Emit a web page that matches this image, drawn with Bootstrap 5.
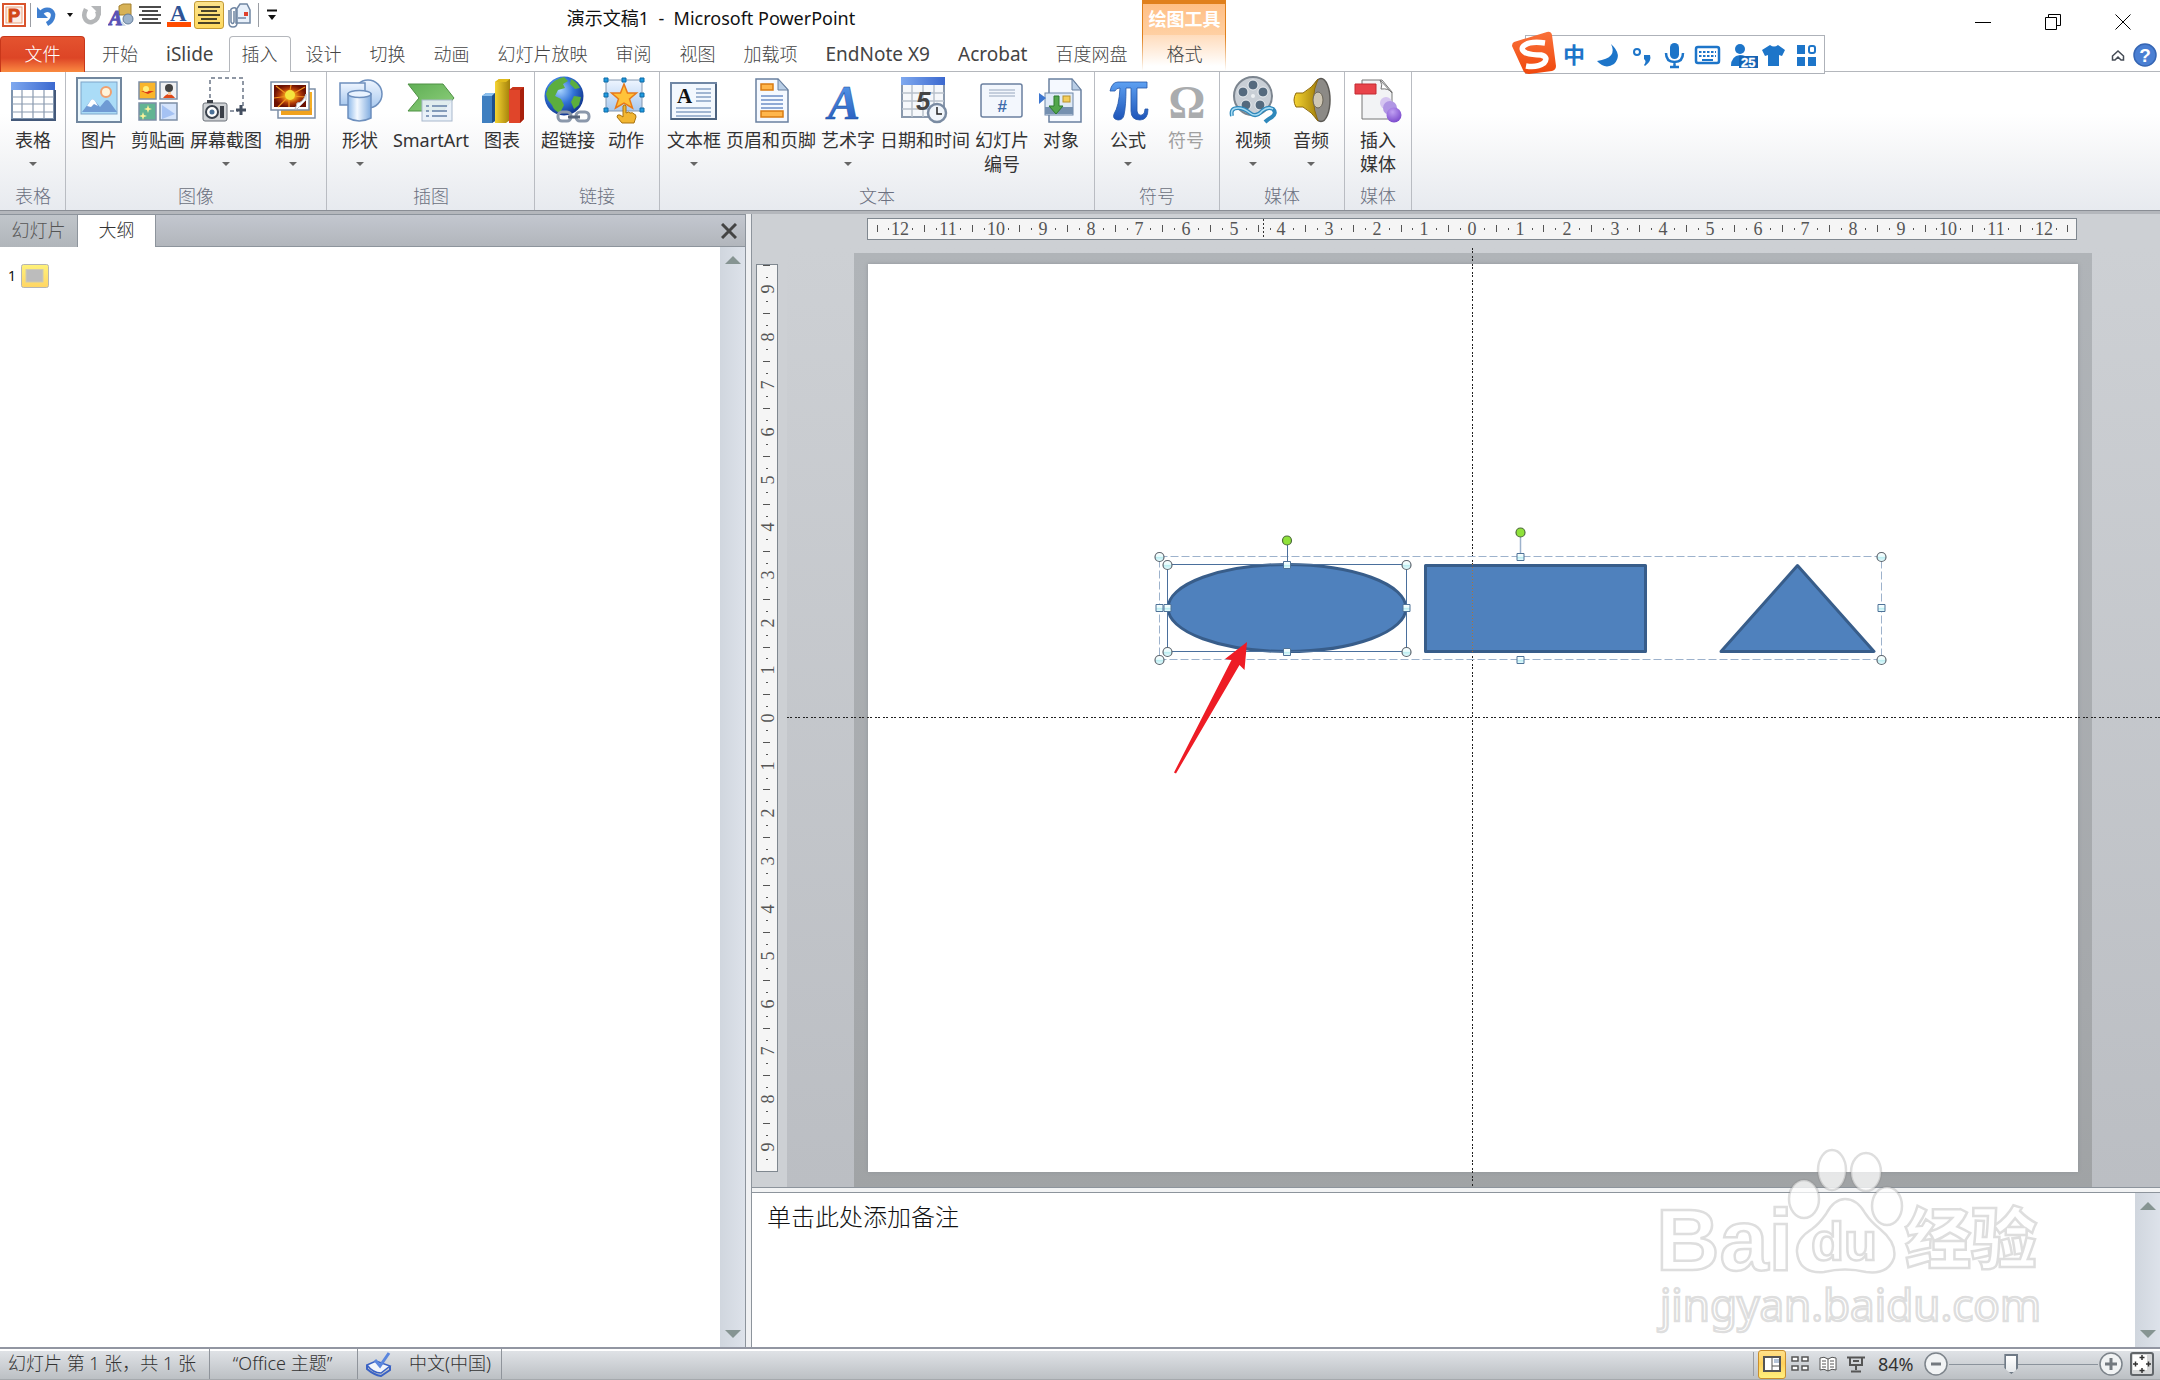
<!DOCTYPE html>
<html lang="zh-CN">
<head>
<meta charset="utf-8">
<meta name="viewport" content="width=device-width, initial-scale=1">
<title>演示文稿1 - Microsoft PowerPoint</title>
<link href="https://cdn.jsdelivr.net/npm/bootstrap@5.3.0/dist/css/bootstrap.min.css" rel="stylesheet">
<style>
body{font-family:"Noto Sans","Noto Sans CJK SC",sans-serif;font-size:18px;line-height:24px;color:#333;background:#fff}
button,textarea,input{font-family:inherit;color:inherit}
.plain{border:0;background:none;padding:0}
.app{height:100vh;min-height:900px;overflow:hidden}
.cjk{font-family:"Noto Sans","Noto Sans CJK SC",sans-serif;font-weight:300}
/* title bar */
.titlebar{height:36px}
.qat{gap:1px;height:30px}
.qat .plain{width:28px;height:28px;display:flex;align-items:center;justify-content:center}
.qat .caretbtn{width:15px}
.qat .held{width:30px;background:linear-gradient(#fbe28b,#ffd95e);border:1px solid #c39a35;border-radius:3px}
.vline{width:1px;height:24px;background:#9a9da3;margin:0 1px}
.apptitle{color:#111;white-space:pre;padding-top:6px}
.winctl{min-width:1017px;padding-right:2px}
.winctl .plain{width:70px;height:40px}
/* tabs */
.tabs{height:36px;border-bottom:1px solid #b4b7bc;padding-right:3px}
.tabs .rtab{display:block;height:36px;padding:6px 13px 0;margin-right:2px;color:#444;text-decoration:none;white-space:nowrap}
.tabs .filetab{width:85px;text-align:center;color:#fff;background:linear-gradient(#e4532f,#dd4526 60%,#f4793b 90%,#f98a3f);border:1px solid #c8371a;border-bottom:0;border-radius:4px 4px 0 0;padding:5px 0 0;margin-right:4px}
.tabs .rtab.current{background:#fff;border:1px solid #b4b7bc;border-bottom:0;border-radius:4px 4px 0 0;padding:5px 12px 0}
.tabs .latin{font-weight:400;font-size:19px}
.ctx{width:84px;height:71px;margin-top:-36px;text-align:center;text-decoration:none;color:#444;border:1px solid;border-top-width:4px;border-image:linear-gradient(#e0801c 50%,#fff) 1;background:linear-gradient(#ff9c00 4px,#ffbf85 4px,#ffd0a3 35px,#ffdcbc 35px,#fff 66px);background-origin:border-box}
.ctx b{display:block;color:#fff;line-height:24px;padding-top:3px;height:38px;font-weight:700}
/* ribbon */
.ribbon{height:139px;background:linear-gradient(#fff 30%,#f3f4f6 65%,#e7eaef);border-bottom:1px solid #8a8e95}
.rgroup{padding:0 4px;border-right:1px solid #b9bcc2}
.rgroup.slim{padding-right:3px}
.rgroup .plain{width:58px;height:112px;padding-top:4px;display:flex;flex-direction:column;align-items:center;white-space:nowrap;color:#333}
.rgroup .plain svg{flex:none;overflow:visible}
.rgroup .plain span{margin-top:4px}
.rgroup .w60{width:60px}.rgroup .w76{width:76px}.rgroup .w84{width:84px}.rgroup .w94{width:94px}
.rgroup .plain:disabled{color:#a0a0a0}
.drop::after{content:"";border:4px solid transparent;border-top:4px solid #666;border-bottom:0;margin-top:10px}
.gname{text-align:center;color:#6b7080;line-height:24px}
/* workspace */
.work{background:#cdd0d4;border-top:3px solid #b4b7bc}
.side{width:746px;border-right:1px solid #8d949c}
.sidehead{height:33px;border-top:1px solid #8d949c;border-bottom:1px solid #8d949c;background:linear-gradient(#c3c7cf,#b2b6bc)}
.sidehead .stab{width:78px;height:32px;padding-top:3px;text-align:center;text-decoration:none;color:#555;border-right:1px solid #8d949c;background:linear-gradient(#c0c5ca,#b0b5ba)}
.sidehead .stab.current{background:#fff;color:#333}
.outline{padding:17px 0 0 8px}
.outline span{font-size:14px;color:#111}
.vscroll{width:25px;background:linear-gradient(90deg,#d0d6de,#dde2ea)}
.vscroll .plain{width:25px;height:26px;display:flex;align-items:center;justify-content:center}
.gutter{width:6px;background:#f0f1f3;border-right:1px solid #8d949c}
.hruler{height:22px;width:1210px;border:1px solid #7f878f;background:#f5f5f5;display:block}
.vruler{width:22px;height:908px;border:1px solid #7f878f;background:#f5f5f5;display:block}
.rulerrow{height:34px;padding:4px 82px 0 115px}
.vcol{width:35px;padding:16px 0 0 4px}
.desk{background:linear-gradient(#cdd0d4,#bbbec3);padding:5px 1px 0 0;overflow:hidden}
.slideframe{padding:11px 14px 15px;background:linear-gradient(#b0b4b8,#a5a8ab 80%,#a0a3a5)}
.slide{width:1210px;height:908px;background:#fff;box-shadow:0 0 4px #8f9499}
.slide svg{display:block;overflow:visible}
.split{height:6px;background:#f2f3f4;border-top:1px solid #8d949c;border-bottom:1px solid #8d949c}
.notes{height:154px}
.notes textarea{border:0;resize:none;outline:0;font-size:24px;line-height:32px;padding:8px 15px;color:#111;overflow:hidden}
.notes textarea::placeholder{color:#111;opacity:1}
/* status */
.status{height:33px;border-top:2px solid #9296a2;background:linear-gradient(#fff 2px,#dfe2e6 2px,#bcc0c4);border-bottom:1px solid #a5a9ad;color:#333}
.status .cell{height:30px;padding:2px 10px 0 8px;border-right:1px solid #8f949b;white-space:nowrap}
.status .plain{width:28px;height:29px;display:flex;align-items:center;justify-content:center}
.status .held{background:linear-gradient(#ffe08a,#ffd15c 45%,#fff07e);border:1px solid #c98e2d;border-radius:3px}
.status .slim{width:26px}
.cell-pages{width:210px}.cell-theme{width:148px}.cell-lang{width:144px}
.pct{width:41px;font-weight:400}
.zoomer{-webkit-appearance:none;appearance:none;width:149px;height:24px;background:linear-gradient(#8b939c,#8b939c) center/100% 1px no-repeat}
.zoomer::-webkit-slider-thumb{-webkit-appearance:none;width:14px;height:20px;clip-path:polygon(0 0,100% 0,100% 70%,50% 100%,0 70%);border:2px solid #6f7a86;background:linear-gradient(#fff,#e4e7ea) padding-box}
/* floating input-method bar */
.ime{position:absolute;top:35px;right:335px;height:39px;width:312px}
.ime .box{height:39px;margin-left:12px;border:1px solid #aeb2b9;background:#fff}
.ime svg{position:absolute;left:0;top:-4px;overflow:visible}
.stamp{position:absolute;right:110px;bottom:36px;pointer-events:none}
</style>
</head>
<body>
<svg width="0" height="0" class="position-absolute" aria-hidden="true">
<defs>
<linearGradient id="gb" x1="0" y1="0" x2="0" y2="1"><stop offset="0" stop-color="#eef5ff"/><stop offset="1" stop-color="#a9c9ee"/></linearGradient>
<linearGradient id="gh" x1="0" y1="0" x2="1" y2="0"><stop offset="0" stop-color="#7fa9ef"/><stop offset="1" stop-color="#3b68cf"/></linearGradient>
<linearGradient id="gcy" x1="0" y1="0" x2="1" y2="0"><stop offset="0" stop-color="#8db9ea"/><stop offset=".4" stop-color="#f4f9ff"/><stop offset="1" stop-color="#7fabdf"/></linearGradient>
<linearGradient id="ggr" x1="0" y1="0" x2="1" y2="1"><stop offset="0" stop-color="#5fae55"/><stop offset="1" stop-color="#8fd07c"/></linearGradient>
<linearGradient id="gy" x1="0" y1="0" x2="1" y2="0"><stop offset="0" stop-color="#f5d432"/><stop offset="1" stop-color="#a3800a"/></linearGradient>
<linearGradient id="gA" x1="0" y1="0" x2="0" y2="1"><stop offset="0" stop-color="#5ea1f2"/><stop offset="1" stop-color="#1d54b8"/></linearGradient>
<linearGradient id="gor" x1="0" y1="0" x2="0" y2="1"><stop offset="0" stop-color="#f9713a"/><stop offset="1" stop-color="#f0480d"/></linearGradient>
<radialGradient id="gg" cx=".4" cy=".35" r=".7"><stop offset="0" stop-color="#a9d4ff"/><stop offset=".5" stop-color="#3273d8"/><stop offset="1" stop-color="#0d2f86"/></radialGradient>
<radialGradient id="gfl"><stop offset="0" stop-color="#fff04a"/><stop offset=".3" stop-color="#f2a51b"/><stop offset=".65" stop-color="#b33c08"/><stop offset="1" stop-color="#6d1204"/></radialGradient>
<radialGradient id="gp" cx=".4" cy=".3" r=".8"><stop offset="0" stop-color="#c0a0f2"/><stop offset="1" stop-color="#7340c8"/></radialGradient>
<linearGradient id="ghd" x1="0" y1="0" x2="0" y2="1"><stop offset="0" stop-color="#fff"/><stop offset=".45" stop-color="#e4fbfc"/><stop offset=".5" stop-color="#b9ecf0"/><stop offset="1" stop-color="#eafcff"/></linearGradient>
</defs>
</svg>

<div class="app d-flex flex-column position-relative">
  <header class="titlebar d-flex">
    <div class="qat d-flex align-items-center">
      <button class="plain" aria-label="PowerPoint"><svg width="26" height="26"><rect x="2" y="2" width="22" height="22" fill="#fff" stroke="#d9542c" stroke-width="2"/><rect x="5" y="5" width="16" height="16" fill="#fdeee4" stroke="#eaa07c"/><text x="7" y="20" font-family="Liberation Sans" font-weight="700" font-size="18" fill="#d24617" stroke="#d24617">P</text></svg></button>
      <div class="vline"></div>
      <button class="plain" aria-label="撤消"><svg width="22" height="22" fill="none"><path d="M5 9C10 3 18 6 17 12q-.5 5-6 8" stroke="#3f7fd0" stroke-width="4.500"/><path d="M1 3v11h11z" fill="#3f7fd0"/></svg></button>
      <button class="plain caretbtn" aria-label="撤消列表"><svg width="8" height="6"><path d="M1 1h6L4 5z" fill="#111"/></svg></button>
      <button class="plain" aria-label="重复"><svg width="22" height="22" fill="none"><path d="M5 5c-5 10 2 14 6 13s8-5 5-11" stroke="#b4b6b8" stroke-width="4.500"/><path d="M10 2h10v10z" fill="#b4b6b8"/></svg></button>
      <button class="plain" aria-label="形状"><svg width="26" height="26"><path d="M11 4l4-2h8v11H11z" fill="#d7b257" stroke="#a4802e"/><circle cx="20" cy="17" r="5" fill="#9db3cb" stroke="#637c99"/><path d="M14 19l4 5h-8z" fill="#cfd9e6"/><text x="1" y="23" font-family="Liberation Serif" font-style="italic" font-weight="700" font-size="20" fill="#5a52b5" stroke="#5a52b5">A</text></svg></button>
      <button class="plain" aria-label="居中"><svg width="24" height="20" stroke="#111" stroke-width="1.500"><path d="M1 2h22M4 6h16M1 10h22M4 14h16M1 18h22"/></svg></button>
      <button class="plain" aria-label="字体颜色"><svg width="26" height="26"><text x="4" y="19" font-family="Liberation Serif" font-weight="700" font-size="23" fill="#2d5396">A</text><path d="M1 20h24v5H1z" fill="#ff4b00"/></svg></button>
      <button class="plain held" aria-label="居中"><svg width="24" height="20" stroke="#111" stroke-width="1.500"><path d="M1 2h22M4 6h16M1 10h22M4 14h16M1 18h22"/></svg></button>
      <button class="plain" aria-label="附件"><svg width="26" height="26" fill="none" stroke="#7086a3" stroke-width="1.500"><path d="M10 8l4-6h7l3 6v13H10z" fill="#e8f0fa"/><path d="M3 8v13q0 4 4 4t4-4V8q-1-3-4-2t-2 3v11q2 3 3 0V9"/><path d="M18 10h4v4h-4z" fill="#e0402c" stroke="none"/><path d="M12 16h8"/></svg></button>
      <div class="vline mx-1"></div>
      <button class="plain caretbtn" aria-label="自定义快速访问工具栏"><svg width="10" height="12"><path d="M0 1.500h10" stroke="#111" stroke-width="2"/><path d="M1 6h8l-4 5z" fill="#111"/></svg></button>
    </div>
    <div class="apptitle flex-grow-1 text-center">演示文稿1  -  Microsoft PowerPoint</div>
    <div class="winctl d-flex justify-content-end">
      <button class="plain" aria-label="最小化"><svg width="16" height="16"><path d="M0 8.500h16" stroke="#000"/></svg></button>
      <button class="plain" aria-label="还原"><svg width="16" height="16" fill="none" stroke="#000"><path d="M.5 3.500h11v12H.5zM3.500 3.500V.5h12v11h-4"/></svg></button>
      <button class="plain" aria-label="关闭"><svg width="16" height="16" stroke="#000"><path d="M.5.5l15 15M15.500.5l-15 15"/></svg></button>
    </div>
  </header>

  <nav class="tabs d-flex cjk" aria-label="功能区">
    <a class="rtab filetab" href="#">文件</a>
    <a class="rtab" href="#">开始</a><a class="rtab latin" href="#">iSlide</a><a class="rtab current" href="#">插入</a><a class="rtab" href="#">设计</a><a class="rtab" href="#">切换</a><a class="rtab" href="#">动画</a><a class="rtab" href="#">幻灯片放映</a><a class="rtab" href="#">审阅</a><a class="rtab" href="#">视图</a><a class="rtab" href="#">加载项</a><a class="rtab latin" href="#">EndNote X9</a><a class="rtab latin" href="#">Acrobat</a><a class="rtab" href="#">百度网盘</a>
    <a class="ctx" href="#"><b>绘图工具</b>格式</a>
    <div class="ms-auto d-flex align-items-center gap-2">
      <button class="plain" aria-label="折叠功能区"><svg width="14" height="14" fill="none" stroke="#444b55" stroke-width="1.500"><path d="M1.500 7L7 2l5.500 5v4H10L7 8l-3 3H1.500z"/></svg></button>
      <button class="plain" aria-label="帮助"><svg width="24" height="24"><circle cx="12" cy="12" r="11" fill="#4a7fd3" stroke="#3565b3" stroke-width="1.500"/><text x="12" y="19" text-anchor="middle" font-family="Liberation Sans" font-weight="700" font-size="19" fill="#fff">?</text></svg></button>
    </div>
  </nav>

  <section class="ribbon d-flex cjk" aria-label="插入">
    <div class="rgroup slim">
      <div class="d-flex"><button class="plain drop"><svg width="48" height="48"><rect x="3" y="7" width="42" height="36" fill="#fff" stroke="#7d93ad" stroke-width="2"/><rect x="2" y="6" width="44" height="8" fill="url(#gh)"/><path d="M3 21h42M3 28h42M3 36h42M13 14v29M24 14v29M35 14v29" stroke="#8b9bb0" stroke-width="1.200"/><path d="M2 44h44V14" fill="none" stroke="#44597a" stroke-width="2"/></svg><span>表格</span></button></div>
      <div class="gname">表格</div>
    </div>
    <div class="rgroup">
      <div class="d-flex">
        <button class="plain"><svg width="48" height="48"><rect x="2" y="2" width="44" height="44" fill="#ecf8fd" stroke="#71879f" stroke-width="2"/><rect x="6" y="6" width="36" height="32" fill="#aadcf7" stroke="#7da4c9"/><circle cx="31" cy="16" r="5" fill="#fff4da" stroke="#f0a06e" stroke-width="2"/><path d="M7 36l9-12q2-2 4 1l5 6 5-6q2-2 4 0l8 11z" fill="#6f9bd4"/><path d="M12 30l4-6q2-2 4 1l3 5-4-2-3 3z" fill="#fff"/></svg><span>图片</span></button>
        <button class="plain w60"><svg width="48" height="48" stroke="#7d8fa6" stroke-width="1.500"><rect x="5" y="6" width="17" height="17" fill="#f9b52b"/><rect x="26" y="6" width="17" height="17" fill="#f1f1f3"/><rect x="5" y="27" width="17" height="17" fill="#62b493"/><rect x="26" y="27" width="17" height="17" fill="#d5e4fb"/><path d="M7 15h13l-6 3z" fill="#d83a17" stroke="none"/><circle cx="12" cy="13" r="3" fill="#ffef7d" stroke="none"/><circle cx="35" cy="12" r="4" fill="#444" stroke="none"/><path d="M29 22q6-8 12 0z" fill="#e04818" stroke="none"/><path d="M34 16h3v3h-3z" fill="#f6c69a" stroke="none"/><path d="M14 29l1 3 3 1-3 1-1 3-1-3-3-1 3-1zM9 36l1 3 3 1-3 1-1 3-1-3-3-1 3-1z" fill="#fbf29a" stroke="none"/><path d="M28 29l13 9-13 5z" fill="#a5c2f3" stroke="none"/></svg><span>剪贴画</span></button>
        <button class="plain w76 drop"><svg width="48" height="48"><path d="M41 30V2H8v22M28 35h8" fill="none" stroke="#6b7686" stroke-width="1.500" stroke-dasharray="4 3"/><path d="M39 29v10M34 34h10" stroke="#444f60" stroke-width="3"/><rect x="1" y="27" width="24" height="18" rx="2" fill="#cfd2d5" stroke="#6a7078"/><path d="M5 24h6v3H5zM18 30h4v12h-4z" fill="#3b4048"/><circle cx="10" cy="36" r="6" fill="#fff" stroke="#39414c" stroke-width="2"/><circle cx="10" cy="36" r="2.500" fill="#4b7197"/></svg><span>屏幕截图</span></button>
        <button class="plain drop"><svg width="48" height="48"><rect x="9" y="13" width="37" height="29" fill="#fff" stroke="#7c8ea6" stroke-width="1.500"/><path d="M12 34h31V16h-3v18z" fill="#f4ae25"/><path d="M12 32h31v7H12z" fill="#f0a21e"/><rect x="2" y="6" width="38" height="28" fill="#fff" stroke="#7c8ea6" stroke-width="1.500"/><rect x="5" y="9" width="32" height="22" fill="url(#gfl)"/><path d="M20 20L7 10M20 20L22 9M20 20L36 11M20 20L37 21M20 20L5 22M20 20L9 31M20 20L20 31" stroke="#f3931f" stroke-width="1.200"/><circle cx="21" cy="19" r="5" fill="#f5e43d"/><path d="M26 33q2-4 2-6 6 0 9-9v6l-9 9z" fill="#fff" stroke="#b9bec7"/></svg><span>相册</span></button>
      </div>
      <div class="gname">图像</div>
    </div>
    <div class="rgroup slim">
      <div class="d-flex">
        <button class="plain drop"><svg width="48" height="48" stroke="#6d8fbd" stroke-width="1.500"><circle cx="32" cy="18" r="14" fill="url(#gb)"/><rect x="4" y="7" width="25" height="22" fill="url(#gb)"/><path d="M12 18v24q11 6 23 0V18z" fill="url(#gcy)"/><ellipse cx="23.500" cy="18" rx="11.500" ry="3.500" fill="#e9f3ff"/></svg><span>形状</span></button>
        <button class="plain w84"><svg width="48" height="48"><path d="M1 8h35l11 14-11 13H1l11-13z" fill="url(#ggr)" stroke="#4f9145"/><rect x="15" y="24" width="30" height="21" fill="#e8f0f8" fill-opacity=".92" stroke="#a9b8cc"/><path d="M19 30h3M19 35h3M19 40h3M25 30h15M25 35h15M25 40h15" stroke="#6480a8" stroke-width="1.500"/></svg><span>SmartArt</span></button>
        <button class="plain"><svg width="48" height="48"><path d="M4 20l4-3h9v28l-3 2H4z" fill="#3f7fc0"/><path d="M4 20l4-3h9l-3 3z" fill="#8cc0ee"/><path d="M14 20l3-3v28l-3 2z" fill="#1f4f8a"/><path d="M17 6l4-3h11v41l-4 3H17z" fill="url(#gy)"/><path d="M17 6l4-3h11l-4 3z" fill="#e0bb1c"/><path d="M31 14l4-3h11v32l-4 4H31z" fill="#e0452a"/><path d="M31 14l4-3h11l-4 3z" fill="#c7341b"/><path d="M42 14l4-3v32l-4 4z" fill="#a8200c"/></svg><span>图表</span></button>
      </div>
      <div class="gname">插图</div>
    </div>
    <div class="rgroup">
      <div class="d-flex">
        <button class="plain"><svg width="48" height="48"><circle cx="20" cy="20" r="19.500" fill="url(#gg)"/><path d="M4 12Q10 3 20 1l4 4-5 3 2 4-7 2-3 6 6 3 3 6-4 8q-6-2-8-8L4 24l-2-6zM27 3q6 3 9 9l-5 1-5-5zM30 20l7 1-2 8-5 4-3-7z" fill="#5cae3d"/><g fill="none" stroke="#8b98ab" stroke-width="3"><rect x="14" y="36" width="13" height="9" rx="4"/><rect x="32" y="36" width="13" height="9" rx="4"/></g><path d="M24 41h12" stroke="#55637a" stroke-width="3"/></svg><span>超链接</span></button>
        <button class="plain"><svg width="48" height="48"><rect x="4" y="4" width="36" height="31" fill="url(#gb)" stroke="#8497af"/><path d="M22 8l3.500 9h9l-7 6 3 9-8.500-5-8.500 5 3-9-7-6h9z" fill="#ffc33a" stroke="#e77a1b" stroke-width="1.500"/><g fill="#1f9ae0" stroke="#0f6aa6"><path d="M2 2h4v4H2zM20 2h4v4h-4zM38 2h4v4h-4zM2 17h4v4H2zM38 17h4v4h-4zM2 32h4v4H2zM38 32h4v4h-4z"/></g><path d="M21 30q2-2 3 0v7q3-2 4 0 3-1 4 1 2 0 2 3l-2 6H20l-5-6q0-3 3-2l3 2z" fill="#f2b632" stroke="#a9720f"/></svg><span>动作</span></button>
      </div>
      <div class="gname">链接</div>
    </div>
    <div class="rgroup">
      <div class="d-flex">
        <button class="plain w60 drop"><svg width="48" height="48"><rect x="1" y="7" width="45" height="36" fill="#f3f8fe" stroke="#7087a5" stroke-width="2"/><path d="M1 43h45V8" fill="none" stroke="#4d637f" stroke-width="2"/><path d="M26 13h15M26 17h15M26 21h15M26 25h15M6 32h35M6 36h35M6 40h35" stroke="#86a0c4" stroke-width="1.500"/><text x="7" y="27" font-family="Liberation Serif" font-weight="700" font-size="21" fill="#111">A</text></svg><span>文本框</span></button>
        <button class="plain w94"><svg width="48" height="48"><path d="M9 3h22l10 11v32H9z" fill="#f5f9ff" stroke="#6980a0" stroke-width="1.500"/><path d="M31 3v11h10z" fill="#b9cee6" stroke="#6980a0"/><rect x="14" y="8" width="12" height="6" fill="#ffb64c" stroke="#d97b12" stroke-width="1.500"/><rect x="14" y="35" width="22" height="6" fill="#ffb64c" stroke="#d97b12" stroke-width="1.500"/><path d="M14 20h22M14 24h22M14 28h22M14 32h22" stroke="#6d8fc8" stroke-width="1.500"/></svg><span>页眉和页脚</span></button>
        <button class="plain w60 drop"><svg width="48" height="48"><text x="4" y="43" font-family="Liberation Serif" font-style="italic" font-weight="700" font-size="48" fill="url(#gA)" stroke="#1a4a9c" stroke-width=".5">A</text></svg><span>艺术字</span></button>
        <button class="plain w94"><svg width="48" height="48"><rect x="1" y="2" width="42" height="39" fill="#f6f8fb" stroke="#8a99ad" stroke-width="2"/><path d="M0 1h44v8H0z" fill="url(#gh)"/><path d="M1 17h42M1 25h42M1 33h42M11 9v32M22 9v32M33 9v32" stroke="#b9c1cc" stroke-width="1.500"/><text x="15" y="34" font-family="Liberation Sans" font-style="italic" font-weight="700" font-size="26" fill="#444">5</text><circle cx="36" cy="37" r="9" fill="#f0f5fa" stroke="#7a8ba2" stroke-width="2.500"/><path d="M36 31v7h5" fill="none" stroke="#222" stroke-width="1.500"/></svg><span>日期和时间</span></button>
        <button class="plain w60"><svg width="48" height="48"><rect x="3" y="8" width="41" height="33" rx="2" fill="#f3f7fd" stroke="#6b80a0" stroke-width="1.500"/><path d="M11 14h26M11 17h26M11 20h26" stroke="#96a6bd"/><text x="24" y="36" text-anchor="middle" font-family="Liberation Sans" font-style="italic" font-weight="700" font-size="17" fill="#3f6cab">#</text></svg><span>幻灯片<br>编号</span></button>
        <button class="plain"><svg width="48" height="48"><path d="M12 3h23l9 11v32H12z" fill="#f5f9ff" stroke="#6980a0" stroke-width="1.500"/><path d="M35 3v11h9z" fill="#b9cee6" stroke="#6980a0"/><rect x="8" y="17" width="28" height="22" fill="#dfeaf6" stroke="#6c86a8"/><path d="M8 31h28v7H8z" fill="#7590b0"/><rect x="26" y="20" width="7" height="6" fill="#f3cd5a" stroke="#b8922c"/><path d="M2 17l7 5-7 6z" fill="#3d76d0"/><path d="M17 20h5v10h4l-7 8-7-8h5z" fill="#53a64c" stroke="#2d7a2d"/></svg><span>对象</span></button>
      </div>
      <div class="gname">文本</div>
    </div>
    <div class="rgroup">
      <div class="d-flex">
        <button class="plain drop"><svg width="48" height="48"><path d="M6 15q2-9 8-9h29v6H33v23q1 5 5 4 3-1 3-6h3q0 11-8 11-9 0-9-9V12h-5q0 18-2 27-1 5-6 5-6-1-4-6 5-8 6-26-4 0-5 3z" fill="url(#gA)" stroke="#2457a8" stroke-width=".8"/></svg><span>公式</span></button>
        <button class="plain" disabled><svg width="48" height="48"><text x="25" y="42" text-anchor="middle" font-family="Liberation Serif" font-weight="700" font-size="46" fill="#aaacae">Ω</text></svg><span>符号</span></button>
      </div>
      <div class="gname">符号</div>
    </div>
    <div class="rgroup">
      <div class="d-flex">
        <button class="plain drop"><svg width="48" height="48"><circle cx="24" cy="20" r="19" fill="#c9cfd6" stroke="#7c858f" stroke-width="2"/><g fill="#556a7e" stroke="#eef1f4"><circle cx="24" cy="9" r="5"/><circle cx="34" cy="16" r="5"/><circle cx="31" cy="29" r="5"/><circle cx="17" cy="29" r="5"/><circle cx="14" cy="16" r="5"/></g><circle cx="24" cy="20" r="2" fill="#eef1f4"/><path d="M3 40q-2-8 6-8 6 0 12 5t12-2q6-5 11-2 4 4-1 8-5 3-7 5" fill="none" stroke="#2e88bb" stroke-width="4"/><path d="M3 40q-2-8 6-8 6 0 12 5t12-2q6-5 11-2" fill="none" stroke="#a8dcf4" stroke-width="1.500"/></svg><span>视频</span></button>
        <button class="plain drop"><svg width="48" height="48"><ellipse cx="34" cy="24" rx="9" ry="21.500" fill="#8c8a86" stroke="#5b5955" stroke-width="1.500"/><path d="M9 17h7Q25 12 31 3q-9 20 0 42-6-9-15-14H9q-4-7 0-14z" fill="url(#gy)" stroke="#8f6b0c"/><ellipse cx="31" cy="24" rx="5" ry="8" fill="#cfc7b4" stroke="#6a6558"/></svg><span>音频</span></button>
      </div>
      <div class="gname">媒体</div>
    </div>
    <div class="rgroup">
      <div class="d-flex"><button class="plain"><svg width="48" height="48"><path d="M8 4h20l10 12v27H8z" fill="#f2f3f5" stroke="#777"/><path d="M26 4q3 5 1 9 8-1 11 4z" fill="#fff" stroke="#777"/><path d="M1 8h21v10H1z" fill="#e8434a" stroke="#c42a30"/><circle cx="32" cy="27" r="6" fill="#d5c5f0"/><circle cx="36" cy="32" r="7" fill="#b096e4"/><circle cx="40" cy="39" r="7.500" fill="url(#gp)"/></svg><span>插入<br>媒体</span></button></div>
      <div class="gname">媒体</div>
    </div>
  </section>

  <main class="work d-flex flex-grow-1 overflow-hidden">
    <aside class="side d-flex flex-column flex-shrink-0 bg-white">
      <div class="sidehead d-flex cjk flex-shrink-0">
        <a class="stab" href="#">幻灯片</a><a class="stab current" href="#">大纲</a>
        <button class="plain ms-auto me-2" aria-label="关闭窗格"><svg class="d-block" width="16" height="16" stroke="#444" stroke-width="3"><path d="M1 1l14 14M15 1L1 15"/></svg></button>
      </div>
      <div class="d-flex flex-grow-1">
        <div class="outline flex-grow-1 d-flex align-items-start">
          <span>1</span>
          <svg class="ms-1" width="30" height="24"><defs><linearGradient id="go" x1="0" y1="0" x2="0" y2="1"><stop offset="0" stop-color="#fff27a"/><stop offset="1" stop-color="#ffd564"/></linearGradient></defs><rect x="1.500" y=".5" width="27" height="23" rx="2" fill="url(#go)" stroke="#b5b5b5"/><rect x="6" y="5.500" width="17" height="12.500" fill="#bcbcbc" stroke="#cfc9b0"/></svg>
        </div>
        <div class="vscroll d-flex flex-column justify-content-between">
          <button class="plain" aria-label="向上滚动"><svg width="16" height="8"><path d="M8 0l8 8H0z" fill="#869492"/></svg></button>
          <button class="plain" aria-label="向下滚动"><svg width="16" height="8"><path d="M8 8l8-8H0z" fill="#869492"/></svg></button>
        </div>
      </div>
    </aside>
    <div class="gutter flex-shrink-0"></div>
    <div class="d-flex flex-column flex-grow-1 overflow-hidden">
      <div class="rulerrow flex-shrink-0 d-flex"><svg class="hruler" id="hr" viewBox="0 0 1208 20"></svg></div>
      <div class="d-flex flex-grow-1 overflow-hidden">
        <div class="vcol flex-shrink-0"><svg class="vruler" id="vr" viewBox="0 0 20 906"></svg></div>
        <div class="desk flex-grow-1 d-flex justify-content-center">
          <div class="slideframe">
            <div class="slide">
              <svg width="1210" height="908" viewBox="868 264 1210 908">
                <g stroke="#222" stroke-width="1" stroke-dasharray="2 1 2 3"><path d="M787 717.500H2160M1472.500 248V1187"/></g>
                <g fill="#4f81bd" stroke="#385d8a" stroke-width="3" stroke-linejoin="round">
                  <ellipse cx="1287" cy="608" rx="119" ry="43.500"/><path d="M1425.500 565.500h220v86h-220zM1797.500 565.500l76.500 86h-153z"/>
                </g>
                <path d="M1472.500 564v88" stroke="#a8743e" stroke-dasharray="1 2"/>
                <path d="M1159.500 556.500h722v103h-722z" fill="none" stroke="#9db2cc" stroke-dasharray="8 3"/>
                <path d="M1167.500 564.500h239v87h-239zM1287.500 544v20" fill="none" stroke="#4a6f9c"/><path d="M1520.500 536v20" stroke="#9db2cc" stroke-width="1.500"/>
                <g fill="url(#ghd)" stroke="#5c646d" stroke-width="1.200"><circle cx="1159.500" cy="557" r="4.500"/><circle cx="1159.500" cy="660" r="4.500"/><circle cx="1881.500" cy="557" r="4.500"/><circle cx="1881.500" cy="660" r="4.500"/><circle cx="1167.500" cy="565" r="4.500"/><circle cx="1167.500" cy="652" r="4.500"/><circle cx="1406.500" cy="565" r="4.500"/><circle cx="1406.500" cy="652" r="4.500"/></g>
                <g fill="url(#ghd)" stroke="#4f7398"><path d="M1156 604.500h7v7h-7z"/><path d="M1164 604.500h7v7h-7z"/><path d="M1403 604.500h7v7h-7z"/><path d="M1283.500 561.500h7v7h-7z"/><path d="M1283.500 648.500h7v7h-7z"/><path d="M1517 553.500h7v7h-7z"/><path d="M1517 656.500h7v7h-7z"/><path d="M1878 604.500h7v7h-7z"/></g>
                <g fill="#8fe23a" stroke="#4d6b3a" stroke-width="1.200"><circle cx="1287" cy="540.500" r="4.500"/><circle cx="1520.500" cy="532.500" r="4.500"/></g>
                <path d="M1247 642l-2.500 28-5-5-63.500 108.500-2-1 57.500-112.500-6.500-1z" fill="#ee1c25"/>
              </svg>
            </div>
          </div>
        </div>
      </div>
      <div class="split flex-shrink-0"></div>
      <div class="notes d-flex flex-shrink-0 bg-white">
        <textarea class="flex-grow-1 cjk" aria-label="备注" placeholder="单击此处添加备注"></textarea>
        <div class="vscroll d-flex flex-column justify-content-between">
          <button class="plain" aria-label="备注向上滚动"><svg width="16" height="8"><path d="M8 0l8 8H0z" fill="#869492"/></svg></button>
          <button class="plain" aria-label="备注向下滚动"><svg width="16" height="8"><path d="M8 8l8-8H0z" fill="#869492"/></svg></button>
        </div>
      </div>
    </div>
  </main>

  <footer class="status d-flex flex-shrink-0 cjk">
    <div class="cell cell-pages">幻灯片 第 1 张，共 1 张</div>
    <div class="cell cell-theme text-center">“Office 主题”</div>
    <div class="cell cell-lang d-flex justify-content-between">
      <svg width="26" height="26"><path d="M1 14l9-4 14 5-9 7q-8 0-14-8z" fill="#f2f5fb" stroke="#3a62c4" stroke-width="1.500"/><path d="M1 14v4q7 6 14 7l9-6v-4" fill="none" stroke="#3a62c4" stroke-width="2"/><path d="M9 9l5 6L23 2" fill="none" stroke="#5a86de" stroke-width="3"/></svg>
      <span>中文(中国)</span></div>
    <div class="ms-auto d-flex align-items-center">
      <div class="vline me-1"></div>
      <button class="plain held" aria-label="普通视图"><svg width="18" height="16"><rect x="1" y="1" width="16" height="14" fill="#fff" stroke="#555" stroke-width="2"/><path d="M9 1v14M9 10h8" stroke="#555"/><path d="M11 3h5v4h-5z" fill="#b5c4d8"/></svg></button>
      <button class="plain" aria-label="幻灯片浏览"><svg width="18" height="16" fill="#fff" stroke="#555" stroke-width="1.500"><path d="M1 1h6v4H1zM11 1h6v4h-6zM1 10h6v4H1zM11 10h6v4h-6z"/></svg></button>
      <button class="plain" aria-label="阅读视图"><svg width="18" height="17" fill="#fff" stroke="#555"><path d="M9 3Q5 0 1 2v12q4-2 8 1 4-3 8-1V2q-4-2-8 1v12M3 5h4M3 8h4M3 11h4M11 5h4M11 8h4M11 11h4"/></svg></button>
      <button class="plain" aria-label="幻灯片放映"><svg width="18" height="17" fill="none" stroke="#555" stroke-width="2"><path d="M0 1.500h18M3 2v7h12V2M9 9v5M4 15.500h10M6 5h6"/></svg></button>
      <span class="pct ms-2 me-1">84%</span>
      <button class="plain slim" aria-label="缩小"><svg width="24" height="24"><circle cx="12" cy="12" r="11" fill="#f1f3f4" stroke="#7d848b" stroke-width="1.500"/><path d="M7 12h10" stroke="#73797f" stroke-width="3"/></svg></button>
      <input class="zoomer" type="range" min="0" max="100" value="41" aria-label="显示比例">
      <button class="plain slim" aria-label="放大"><svg width="24" height="24"><circle cx="12" cy="12" r="11" fill="#f1f3f4" stroke="#7d848b" stroke-width="1.500"/><path d="M6 12h12M12 6v12" stroke="#73797f" stroke-width="3"/></svg></button>
      <button class="plain mx-1" aria-label="适应窗口"><svg width="24" height="24"><rect x="1" y="1" width="22" height="22" rx="2" fill="#d7d8d9" stroke="#62666a" stroke-width="2"/><path d="M3 3h14v15H3z" fill="#fff"/><path d="M12 3v5M9.500 5.500h5M12 16v5M9.500 18.500h5M3 12h5M5.500 9.500v5M16 12h5M18.500 9.500v5" stroke="#333" stroke-width="1.500"/></svg></button>
    </div>
  </footer>

  <div class="ime"><div class="box"></div>
    <svg width="312" height="48" fill="#1d75c9" aria-hidden="true">
      <g transform="translate(-2 0)"><path d="M3 11L36 1q4-1 5 3l4 31q0 4-4 5l-23 3q-5 0-6-4L1 15q0-3 2-4z" fill="url(#gor)"/>
      <path d="M34 12Q20 10 14 14t1 8q6 2 15 2 8 2 3 8-7 5-18 3" fill="none" stroke="#fff" stroke-width="5.500"/></g>
      <text x="50" y="32" font-family="Noto Sans CJK SC" font-weight="700" font-size="22">中</text>
      <path d="M98 13q7 14-14 17 8 9 17 3 9-9-3-20z"/>
      <circle cx="124" cy="21" r="3" fill="none" stroke="#1d75c9" stroke-width="2"/><path d="M131 24h6q2 6-5 11l-1-1q3-4 0-6z"/>
      <rect x="157" y="12" width="9" height="16" rx="4.500"/><path d="M153 22q0 9 8.500 9t8.500-9M161.500 31v5M157 36h9" fill="none" stroke="#1d75c9" stroke-width="2.500"/>
      <rect x="183" y="16" width="23" height="16" rx="2" fill="none" stroke="#1d75c9" stroke-width="2.500"/><path d="M186 21h17M186 25h17" stroke="#1d75c9" stroke-width="2" stroke-dasharray="2.500 1.500"/><path d="M189 29h11" stroke="#1d75c9" stroke-width="2"/>
      <circle cx="227" cy="18" r="5"/><path d="M218 35q0-10 9-11 6 0 8 4v7z"/><rect x="226" y="25" width="19" height="12" fill="#1463b4"/><text x="228" y="36" font-family="Liberation Sans" font-weight="700" font-size="13" fill="#fff" stroke="#fff" stroke-width=".3">25</text>
      <path d="M257 14q4 3 8 0l7 5-3 6-3-1v11h-11V24l-3 1-3-6z"/>
      <path d="M284 14h8v9h-8zM284 26h8v9h-8zM295 26h8v9h-8z"/><rect x="296" y="15" width="6" height="7" rx="2" fill="none" stroke="#1d75c9" stroke-width="2"/>
    </svg>
  </div>

  <svg class="stamp" width="400" height="200" viewBox="1650 1144 400 200" fill="#fff" fill-opacity=".75" stroke="#8a8a8a" stroke-opacity=".28" stroke-width="2.500">
    <text x="1656" y="1270" font-family="Liberation Sans" font-weight="700" font-size="88">Bai</text>
    <ellipse cx="1804" cy="1199" rx="15" ry="19"/><ellipse cx="1832" cy="1170" rx="14" ry="20"/><ellipse cx="1866" cy="1172" rx="15" ry="19"/><ellipse cx="1887" cy="1206" rx="15" ry="19"/>
    <path d="M1845 1199q12 0 20 14 6 9 15 16 17 14 14 29-6 17-28 14-21-5-42 0-25 2-27-20-1-13 15-23 7-5 14-15 8-15 19-15z"/>
    <text x="1811" y="1260" font-family="Liberation Sans" font-weight="700" font-size="54">du</text>
    <text x="1905" y="1263" font-family="Noto Sans CJK SC" font-weight="900" font-size="66">经验</text>
    <text x="1660" y="1321" font-family="Noto Sans" font-size="44">jingyan.baidu.com</text>
  </svg>
</div>

<script>
// Centimetre rulers: a number on each unit, dots on the quarters, a tick on the halves.
const unit = 1210 / 25.4;
function drawRuler(id, centre, reach, vertical) {
  let out = '';
  for (let q = -reach * 4 - 2; q <= reach * 4 + 2; q++) {
    const p = Math.round(centre + q * unit / 4);
    const n = Math.abs(q / 4);
    if (q % 4 === 0) {
      out += vertical
        ? `<text transform="translate(17 ${p}) rotate(-90)" text-anchor="middle">${n}</text>`
        : `<text x="${p}" y="16" text-anchor="middle">${n}</text>`;
    } else {
      const half = q % 2 === 0, len = half ? 7 : 2, a = half ? 6 : 9;
      out += vertical ? `<rect x="${a}" y="${p}" width="${len}" height="1"/>` : `<rect x="${p}" y="${a}" width="1" height="${len}"/>`;
    }
  }
  if (!vertical) out += '<path d="M395.500 0v20" stroke="#333" stroke-dasharray="2 2"/>';
  const el = document.getElementById(id);
  el.setAttribute('fill', '#555');
  el.setAttribute('font-family', 'Liberation Serif');
  el.setAttribute('font-size', '18');
  el.innerHTML = out;
}
drawRuler('hr', 604, 12, false);
drawRuler('vr', 453, 9, true);
</script>
<script src="https://cdn.jsdelivr.net/npm/bootstrap@5.3.0/dist/js/bootstrap.bundle.min.js"></script>
</body>
</html>
